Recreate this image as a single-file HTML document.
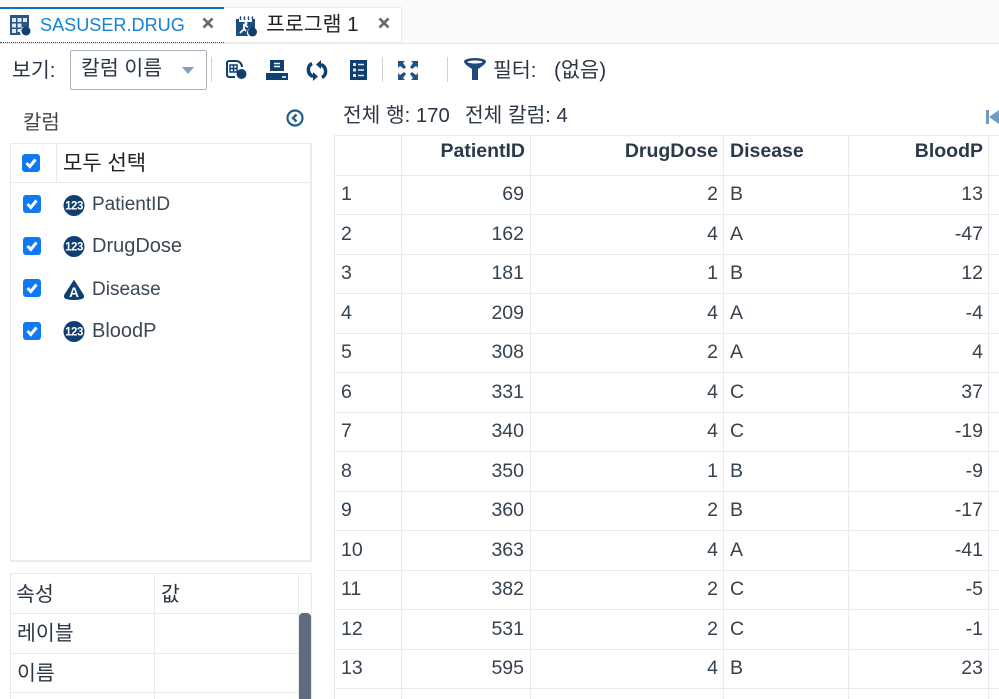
<!DOCTYPE html>
<html><head><meta charset="utf-8">
<style>
html,body{margin:0;padding:0;width:999px;height:699px;overflow:hidden;background:#fff}
body{position:relative;font-family:"Liberation Sans","Noto Sans CJK KR",sans-serif;color:#36434f;font-size:19.5px}
.a{position:absolute;white-space:nowrap}
.l{position:absolute;background:#e8ebee}
.t{position:absolute;white-space:nowrap;line-height:24px;height:24px}
.k{font-size:20.5px;color:#2b3644}
.h{font-weight:700;font-size:19.5px;color:#2b3a4a}
.r{text-align:right}
.cb{position:absolute;width:18px;height:18px;background:#0f78f5;border-radius:3px}
.cb svg{position:absolute;left:0;top:0}
svg{position:absolute}
</style></head><body>
<!-- tab bar -->
<div class="a" style="left:0;top:0;width:999px;height:43px;background:#fafafa"></div>
<div class="l" style="left:0;top:43px;width:999px;height:1px;background:#e6e6e6"></div>
<div class="a" style="left:0;top:7px;width:224px;background:#fff;border-top:2px solid #0b73c2;border-bottom:1px dotted #1d4f78;box-sizing:border-box;height:36px"></div>
<div class="a" style="left:224px;top:7px;width:178px;height:36px;background:#fff;border:1px solid #ebebeb;border-left:0;box-sizing:border-box"></div>
<svg style="left:10px;top:15px" width="21" height="21" viewBox="0 0 21 21"><path d="M0 0H19V12H16A5 5 0 0 0 11 20H0Z" fill="#2a5585"/><g fill="#dfe7ef"><rect x="2" y="3" width="4" height="4"/><rect x="7.500" y="3" width="4" height="4"/><rect x="13" y="3" width="4" height="4"/><rect x="2" y="8.500" width="4" height="4"/><rect x="7.500" y="8.500" width="4" height="4"/><rect x="2" y="14" width="4" height="4"/><rect x="7.500" y="14" width="4" height="3"/></g><circle cx="16" cy="16" r="4.500" fill="#0f3f70"/></svg>
<div class="t" style="left:40px;top:13px;color:#1582d2;font-size:18.1px">SASUSER.DRUG</div>
<svg style="left:202px;top:17px" width="12" height="12" viewBox="0 0 12 12"><path d="M1.500 1.500L10.500 10.500M10.500 1.500L1.500 10.500" stroke="#666" stroke-width="2.600"/></svg>
<svg style="left:236px;top:15px" width="21" height="22" viewBox="0 0 21 22"><path d="M0 4H3V7H16V4H19V13H16A5 5 0 0 0 12 21H0Z" fill="#1f4b7c"/><path d="M5 1.500Q3.500 3 5 5M9 1.500Q7.500 3 9 5M13 1.500Q11.500 3 13 5M17 1.500Q15.500 3 17 5" stroke="#1f4b7c" stroke-width="1.400" fill="none"/><path d="M4 18L8 14L10 16M8 14L8 10L12 12" stroke="#fff" stroke-width="1.800" fill="none"/><circle cx="10" cy="8.500" r="1.500" fill="#fff"/><circle cx="16.500" cy="17" r="4.500" fill="#0f3f70"/></svg>
<div class="t" style="left:266px;top:13px;font-size:20.5px;color:#222">프로그램 1</div>
<svg style="left:378px;top:17px" width="12" height="12" viewBox="0 0 12 12"><path d="M1.500 1.500L10.500 10.500M10.500 1.500L1.500 10.500" stroke="#666" stroke-width="2.600"/></svg>
<!-- toolbar -->
<div class="t k" style="left:12px;top:59px">보기:</div>
<div class="a" style="left:70px;top:50px;width:137px;height:40px;border:1px solid #a9b2bd;border-radius:2px;box-sizing:border-box"></div>
<div class="t k" style="left:81px;top:57px">칼럼 이름</div>
<svg style="left:182px;top:67px" width="12" height="7"><path d="M0 0H12L6 7Z" fill="#7f9fc0"/></svg>
<div class="l" style="left:211px;top:57px;width:1px;height:25px;background:#cfd3d6"></div>
<svg style="left:226px;top:60px" width="21" height="20" viewBox="0 0 21 20"><path d="M10 1H3A2 2 0 0 0 1 3V15A2 2 0 0 0 3 17H9M10 1A6 6 0 0 1 16 7" fill="none" stroke="#0f3f70" stroke-width="2"/><path d="M4 5H11V12H4ZM7.500 5V12M4 8.500H11" fill="none" stroke="#0f3f70" stroke-width="1.500"/><circle cx="15.500" cy="14" r="5" fill="#0f3f70"/></svg>
<svg style="left:266px;top:60px" width="22" height="20" viewBox="0 0 22 20"><path d="M4 0H18V11H4Z" fill="#0f3f70"/><path d="M8 3.500H14M8 6.500H14" stroke="#fff" stroke-width="1.500"/><path d="M0 13H22V20H0Z" fill="#0f3f70"/><path d="M16 17H20" stroke="#fff" stroke-width="1.500"/></svg>
<svg style="left:306px;top:60px" width="22" height="21" viewBox="0 0 22 21"><path d="M6 3.500C1 6 1 14 7 16.500" fill="none" stroke="#0f3f70" stroke-width="3.500"/><path d="M16 17.500C21 15 21 7 15 4.500" fill="none" stroke="#0f3f70" stroke-width="3.500"/><path d="M15 0V9L10 4.500ZM7 21V12L12 16.500Z" fill="#0f3f70"/></svg>
<svg style="left:350px;top:60px" width="17" height="20" viewBox="0 0 17 20"><rect width="17" height="20" fill="#0f3f70"/><path d="M3 3h3v3H3zM3 8.500h3v3H3zM3 14h3v3H3z" fill="#dfe7ef"/><path d="M8 4.500H14M8 10H14M8 15.500H14" stroke="#dfe7ef" stroke-width="1.500"/></svg>
<div class="l" style="left:382px;top:57px;width:1px;height:25px;background:#cfd3d6"></div>
<svg style="left:398px;top:61px" width="20" height="19" viewBox="0 0 20 19"><g fill="#1f5585"><path d="M0 0H7L5 2L8 6L6 8L2 5L0 7Z"/><path d="M20 0H13L15 2L12 6L14 8L18 5L20 7Z"/><path d="M0 19H7L5 17L8 13L6 11L2 14L0 12Z"/><path d="M20 19H13L15 17L12 13L14 11L18 14L20 12Z"/></g></svg>
<div class="l" style="left:447px;top:57px;width:1px;height:25px;background:#cfd3d6"></div>
<svg style="left:464px;top:58px" width="22" height="22" viewBox="0 0 22 22"><path d="M0 3.500A11 3.500 0 0 1 22 3.500Q22 6 14 11V22H8V11Q0 6 0 3.500Z" fill="#1f4b7c"/><ellipse cx="11" cy="4" rx="7.500" ry="1.500" fill="#fff"/></svg>
<div class="t k" style="left:493px;top:59px">필터:</div>
<div class="t k" style="left:554px;top:59px;font-size:20.8px">(없음)</div>
<!-- left panel -->
<div class="t k" style="left:23px;top:111px;color:#444;font-size:20px">칼럼</div>
<svg style="left:286px;top:109px" width="18" height="18" viewBox="0 0 18 18"><circle cx="9" cy="9" r="7.500" fill="none" stroke="#1f5f8b" stroke-width="2.200"/><path d="M10.500 5.500L7 9L10.500 12.500" fill="none" stroke="#1f5f8b" stroke-width="2.400"/></svg>
<div class="a" style="left:10px;top:143px;width:302px;height:419px;box-sizing:border-box;border:1px solid #e8ebee;border-right-width:2px;border-bottom-width:2px"></div>
<div class="l" style="left:10px;top:182px;width:302px;height:1px"></div>
<div class="l" style="left:56px;top:143px;width:1px;height:39px"></div>
<div class="cb" style="left:22px;top:154px"><svg width="18" height="18"><path d="M4.500 9L7.800 12.500L13.500 5.500" fill="none" stroke="#fff" stroke-width="3"/></svg></div>
<div class="t" style="left:63px;top:152px;font-size:21px;color:#222">모두 선택</div>
<div class="cb" style="left:23px;top:195px"><svg width="18" height="18"><path d="M4.500 9L7.800 12.500L13.500 5.500" fill="none" stroke="#fff" stroke-width="3"/></svg></div>
<div class="cb" style="left:23px;top:237px"><svg width="18" height="18"><path d="M4.500 9L7.800 12.500L13.500 5.500" fill="none" stroke="#fff" stroke-width="3"/></svg></div>
<div class="cb" style="left:23px;top:279px"><svg width="18" height="18"><path d="M4.500 9L7.800 12.500L13.500 5.500" fill="none" stroke="#fff" stroke-width="3"/></svg></div>
<div class="cb" style="left:23px;top:322px"><svg width="18" height="18"><path d="M4.500 9L7.800 12.500L13.500 5.500" fill="none" stroke="#fff" stroke-width="3"/></svg></div>
<svg style="left:63px;top:195px" width="22" height="21"><circle cx="11" cy="10.500" r="10.500" fill="#0f3f70"/><text x="11" y="14.500" font-size="11.500" font-weight="700" fill="#fff" text-anchor="middle" font-family="Liberation Sans" letter-spacing="-.5">123</text></svg>
<svg style="left:63px;top:236px" width="22" height="21"><circle cx="11" cy="10.500" r="10.500" fill="#0f3f70"/><text x="11" y="14.500" font-size="11.500" font-weight="700" fill="#fff" text-anchor="middle" font-family="Liberation Sans" letter-spacing="-.5">123</text></svg>
<svg style="left:63px;top:279px" width="22" height="21"><path d="M11 2L20 16Q21 19 18 19.500Q11 21 4 19.500Q1 19 2 16Z" fill="#0f3f70" stroke="#0f3f70" stroke-width="1.500"/><text x="11" y="18" font-size="13.500" font-weight="700" fill="#fff" text-anchor="middle" font-family="Liberation Sans">A</text></svg>
<svg style="left:63px;top:321px" width="22" height="21"><circle cx="11" cy="10.500" r="10.500" fill="#0f3f70"/><text x="11" y="14.500" font-size="11.500" font-weight="700" fill="#fff" text-anchor="middle" font-family="Liberation Sans" letter-spacing="-.5">123</text></svg>
<div class="t" style="left:92px;top:193px;font-size:19px;color:#3b4754">PatientID</div>
<div class="t" style="left:92px;top:234px;font-size:20px;color:#3b4754">DrugDose</div>
<div class="t" style="left:92px;top:278px;font-size:19px;color:#3b4754">Disease</div>
<div class="t" style="left:92px;top:319px;font-size:20px;color:#3b4754">BloodP</div>
<!-- property table -->
<div class="l" style="left:10px;top:573px;width:302px;height:1px"></div>
<div class="l" style="left:10px;top:573px;width:1px;height:126px"></div>
<div class="l" style="left:154px;top:573px;width:1px;height:126px"></div>
<div class="l" style="left:298px;top:573px;width:1px;height:126px"></div>
<div class="l" style="left:311px;top:573px;width:1px;height:126px"></div>
<div class="l" style="left:10px;top:613px;width:288px;height:1px"></div>
<div class="l" style="left:10px;top:653px;width:288px;height:1px"></div>
<div class="l" style="left:10px;top:692px;width:288px;height:1px"></div>
<div class="a" style="left:299px;top:613px;width:12px;height:86px;background:#606b7d;border-radius:4px 4px 0 0"></div>
<div class="t k" style="left:16px;top:583px">속성</div>
<div class="t k" style="left:161px;top:583px">값</div>
<div class="t k" style="left:17px;top:622px">레이블</div>
<div class="t k" style="left:17px;top:662px">이름</div>
<!-- data table -->
<div class="t k" style="left:343px;top:104px;font-size:20.3px">전체 행: 170</div>
<div class="t k" style="left:465px;top:104px;font-size:20.3px">전체 칼럼: 4</div>
<svg style="left:986px;top:110px" width="13" height="14"><rect width="3" height="14" fill="#6f9cc0"/><path d="M3 7L13 0V14Z" fill="#6f9cc0"/></svg>
<div class="l" style="left:334px;top:135px;width:665px;height:1px"></div>
<div class="l" style="left:334px;top:175px;width:665px;height:1px"></div>
<div class="l" style="left:334px;top:214px;width:665px;height:1px"></div>
<div class="l" style="left:334px;top:254px;width:665px;height:1px"></div>
<div class="l" style="left:334px;top:293px;width:665px;height:1px"></div>
<div class="l" style="left:334px;top:333px;width:665px;height:1px"></div>
<div class="l" style="left:334px;top:372px;width:665px;height:1px"></div>
<div class="l" style="left:334px;top:412px;width:665px;height:1px"></div>
<div class="l" style="left:334px;top:451px;width:665px;height:1px"></div>
<div class="l" style="left:334px;top:491px;width:665px;height:1px"></div>
<div class="l" style="left:334px;top:530px;width:665px;height:1px"></div>
<div class="l" style="left:334px;top:570px;width:665px;height:1px"></div>
<div class="l" style="left:334px;top:609px;width:665px;height:1px"></div>
<div class="l" style="left:334px;top:649px;width:665px;height:1px"></div>
<div class="l" style="left:334px;top:688px;width:665px;height:1px"></div>
<div class="l" style="left:334px;top:135px;width:1px;height:564px"></div>
<div class="l" style="left:401px;top:135px;width:1px;height:564px"></div>
<div class="l" style="left:530px;top:135px;width:1px;height:564px"></div>
<div class="l" style="left:723px;top:135px;width:1px;height:564px"></div>
<div class="l" style="left:848px;top:135px;width:1px;height:564px"></div>
<div class="l" style="left:988px;top:135px;width:1px;height:564px"></div>
<div class="t r h" style="left:402px;width:123px;top:139px">PatientID</div>
<div class="t r h" style="left:531px;width:187px;top:139px">DrugDose</div>
<div class="t h" style="left:730px;top:139px">Disease</div>
<div class="t r h" style="left:849px;width:134px;top:139px">BloodP</div>
<div class="t" style="left:341px;top:182px">1</div><div class="t r" style="left:402px;width:122px;top:182px">69</div><div class="t r" style="left:531px;width:187px;top:182px">2</div><div class="t" style="left:730px;top:182px">B</div><div class="t r" style="left:849px;width:134px;top:182px">13</div>
<div class="t" style="left:341px;top:222px">2</div><div class="t r" style="left:402px;width:122px;top:222px">162</div><div class="t r" style="left:531px;width:187px;top:222px">4</div><div class="t" style="left:730px;top:222px">A</div><div class="t r" style="left:849px;width:134px;top:222px">-47</div>
<div class="t" style="left:341px;top:261px">3</div><div class="t r" style="left:402px;width:122px;top:261px">181</div><div class="t r" style="left:531px;width:187px;top:261px">1</div><div class="t" style="left:730px;top:261px">B</div><div class="t r" style="left:849px;width:134px;top:261px">12</div>
<div class="t" style="left:341px;top:301px">4</div><div class="t r" style="left:402px;width:122px;top:301px">209</div><div class="t r" style="left:531px;width:187px;top:301px">4</div><div class="t" style="left:730px;top:301px">A</div><div class="t r" style="left:849px;width:134px;top:301px">-4</div>
<div class="t" style="left:341px;top:340px">5</div><div class="t r" style="left:402px;width:122px;top:340px">308</div><div class="t r" style="left:531px;width:187px;top:340px">2</div><div class="t" style="left:730px;top:340px">A</div><div class="t r" style="left:849px;width:134px;top:340px">4</div>
<div class="t" style="left:341px;top:380px">6</div><div class="t r" style="left:402px;width:122px;top:380px">331</div><div class="t r" style="left:531px;width:187px;top:380px">4</div><div class="t" style="left:730px;top:380px">C</div><div class="t r" style="left:849px;width:134px;top:380px">37</div>
<div class="t" style="left:341px;top:419px">7</div><div class="t r" style="left:402px;width:122px;top:419px">340</div><div class="t r" style="left:531px;width:187px;top:419px">4</div><div class="t" style="left:730px;top:419px">C</div><div class="t r" style="left:849px;width:134px;top:419px">-19</div>
<div class="t" style="left:341px;top:459px">8</div><div class="t r" style="left:402px;width:122px;top:459px">350</div><div class="t r" style="left:531px;width:187px;top:459px">1</div><div class="t" style="left:730px;top:459px">B</div><div class="t r" style="left:849px;width:134px;top:459px">-9</div>
<div class="t" style="left:341px;top:498px">9</div><div class="t r" style="left:402px;width:122px;top:498px">360</div><div class="t r" style="left:531px;width:187px;top:498px">2</div><div class="t" style="left:730px;top:498px">B</div><div class="t r" style="left:849px;width:134px;top:498px">-17</div>
<div class="t" style="left:341px;top:538px">10</div><div class="t r" style="left:402px;width:122px;top:538px">363</div><div class="t r" style="left:531px;width:187px;top:538px">4</div><div class="t" style="left:730px;top:538px">A</div><div class="t r" style="left:849px;width:134px;top:538px">-41</div>
<div class="t" style="left:341px;top:577px">11</div><div class="t r" style="left:402px;width:122px;top:577px">382</div><div class="t r" style="left:531px;width:187px;top:577px">2</div><div class="t" style="left:730px;top:577px">C</div><div class="t r" style="left:849px;width:134px;top:577px">-5</div>
<div class="t" style="left:341px;top:617px">12</div><div class="t r" style="left:402px;width:122px;top:617px">531</div><div class="t r" style="left:531px;width:187px;top:617px">2</div><div class="t" style="left:730px;top:617px">C</div><div class="t r" style="left:849px;width:134px;top:617px">-1</div>
<div class="t" style="left:341px;top:656px">13</div><div class="t r" style="left:402px;width:122px;top:656px">595</div><div class="t r" style="left:531px;width:187px;top:656px">4</div><div class="t" style="left:730px;top:656px">B</div><div class="t r" style="left:849px;width:134px;top:656px">23</div>
</body></html>
